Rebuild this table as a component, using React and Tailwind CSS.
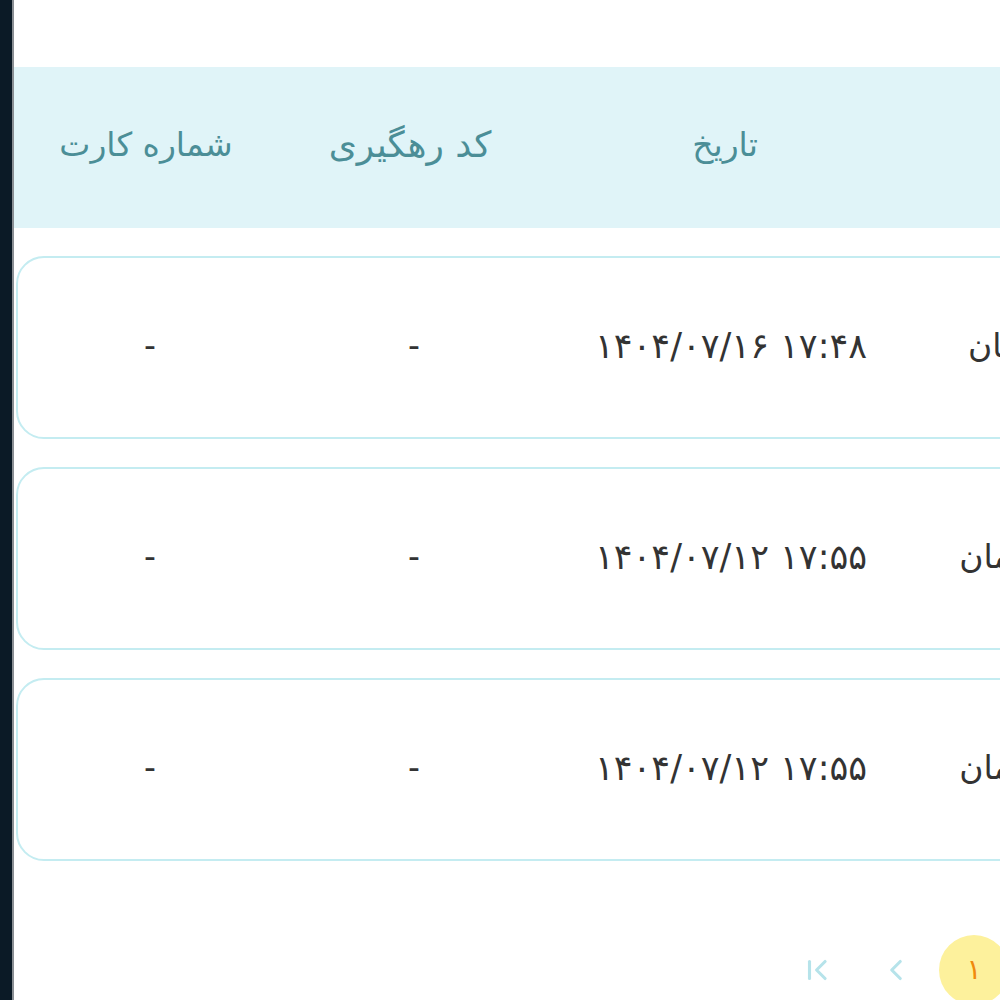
import React from 'react';

const rows = [
  { card: '-', tracking: '-', date: '۱۴۰۴/۰۷/۱۶ ۱۷:۴۸', amount: '۵۰,۰۰۰ تومان' },
  { card: '-', tracking: '-', date: '۱۴۰۴/۰۷/۱۲ ۱۷:۵۵', amount: '۱۰۰,۰۰۰ تومان' },
  { card: '-', tracking: '-', date: '۱۴۰۴/۰۷/۱۲ ۱۷:۵۵', amount: '۱۰۰,۰۰۰ تومان' },
];

const gridCols = 'grid grid-cols-[264px_264px_366px_300px] items-center';

const App = () => {
  return (
    <div
      className="flex h-screen w-full overflow-hidden bg-white"
      style={{ fontFamily: '"DejaVu Sans", "Noto Sans", sans-serif' }}
    >
      <div className="w-[14px] shrink-0 bg-[#0b1a26] border-r-2 border-[#8a8f94]" />
      <div className="flex-1 overflow-hidden" dir="ltr">
        <div className="w-[1200px] pt-[67px]">
          {/* header */}
          <div className={`${gridCols} h-[161px] pb-[6px] bg-[#e0f4f8] text-[#4b8e97] text-[33px]`}>
            <div className="text-center" dir="rtl">شماره کارت</div>
            <div className="text-center text-[36px]" dir="rtl">کد رهگیری</div>
            <div className="text-center" dir="rtl">تاریخ</div>
            <div className="text-center" dir="rtl">مبلغ</div>
          </div>

          {/* rows */}
          <div className="flex flex-col gap-[28px] mt-[28px] pl-[2px]">
            {rows.map((row, i) => (
              <div
                key={i}
                className={`${gridCols} h-[183px] pb-[3px] border-2 border-[#c4ecf1] rounded-[28px] text-[#333] text-[33px]`}
              >
                <div className="text-center">{row.card}</div>
                <div className="text-center">{row.tracking}</div>
                <div className="text-center text-[35px] pl-[4px]" dir="ltr">{row.date}</div>
                <div className="text-center" dir="rtl">{row.amount}</div>
              </div>
            ))}
          </div>

          {/* pagination */}
          <div className="flex items-center gap-[8px] mt-[74px] ml-[769px]">
            <button className="w-[70px] h-[70px] flex items-center justify-center text-[#b6e3ea]">
              <svg width="34" height="34" viewBox="0 0 24 24" fill="none" stroke="currentColor" strokeWidth="2.2" strokeLinecap="round" strokeLinejoin="round">
                <path d="M6 6v12" />
                <path d="M17 6l-6 6 6 6" />
              </svg>
            </button>
            <button className="w-[70px] h-[70px] flex items-center justify-center text-[#b6e3ea]">
              <svg width="34" height="34" viewBox="0 0 24 24" fill="none" stroke="currentColor" strokeWidth="2.2" strokeLinecap="round" strokeLinejoin="round">
                <path d="M15 6l-6 6 6 6" />
              </svg>
            </button>
            <button className="w-[70px] h-[70px] rounded-full bg-[#fdf19c] text-[#f08a0c] text-[28px] flex items-center justify-center">
              ۱
            </button>
          </div>
        </div>
      </div>
    </div>
  );
};

export default App;
